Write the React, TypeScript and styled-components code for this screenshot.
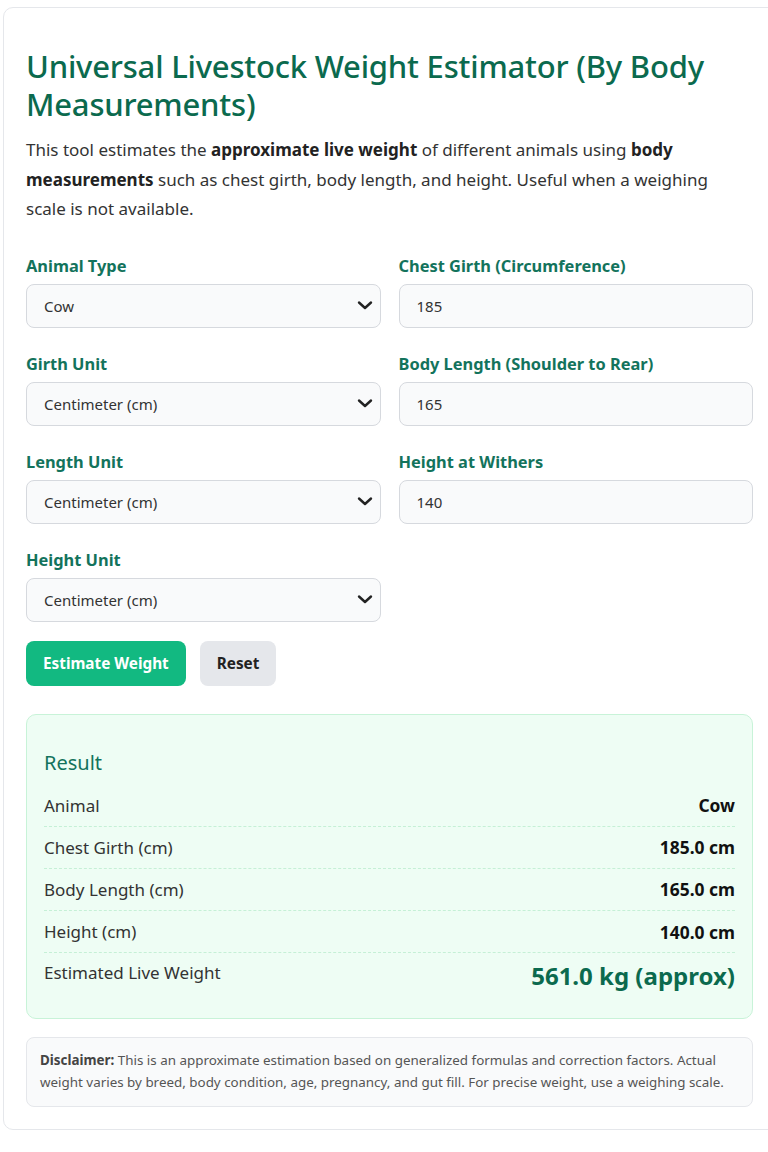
import React, { useState } from 'react';
import styled, { createGlobalStyle } from 'styled-components';

const GlobalStyle = createGlobalStyle`
  html, body {
    margin: 0;
    padding: 0;
    background: #ffffff;
    overflow-x: hidden;
  }
  body {
    font-family: 'Noto Sans', 'Open Sans', sans-serif;
    color: #222;
  }
`;

// Outer card, runs past the right edge of the viewport like the screenshot
const Card = styled.div`
  margin: 7px 0 0 3px;
  width: 790px;
  box-sizing: border-box;
  padding: 39px 36px 22px 22px;
  border: 1px solid #e5e7eb;
  border-radius: 10px;
  background: #fff;
`;

const Inner = styled.div`
  width: 727px;
`;

const Title = styled.h1`
  margin: 0 0 12px;
  font-size: 31px;
  line-height: 38px;
  font-weight: 500;
  color: #0b6a4e;
  letter-spacing: -0.2px;
`;

const Intro = styled.p`
  margin: 0 0 31px;
  padding-right: 24px;
  font-size: 17px;
  line-height: 29.5px;
  color: #333;

  b {
    font-weight: 700;
    color: #222;
  }
`;

const FormGrid = styled.div`
  display: grid;
  grid-template-columns: 1fr 1fr;
  column-gap: 18px;
  row-gap: 25px;
`;

const Field = styled.div`
  display: flex;
  flex-direction: column;
  gap: 7px;
`;

const Label = styled.label`
  font-size: 16.4px;
  line-height: 22px;
  font-weight: 700;
  color: #13735c;
`;

const controlBase = `
  width: 100%;
  height: 44px;
  box-sizing: border-box;
  border: 1px solid #d6d9de;
  border-radius: 8px;
  background: #f9fafb;
  padding: 0 17px;
  font-family: 'Noto Sans', 'Open Sans', sans-serif;
  font-size: 15px;
  color: #333;
  outline: none;
`;

const SelectWrap = styled.div`
  position: relative;
`;

const Select = styled.select`
  ${controlBase}
  appearance: none;
  -webkit-appearance: none;
`;

const Chevron = styled.svg`
  position: absolute;
  right: 8px;
  top: 15px;
  pointer-events: none;
`;

const Input = styled.input`
  ${controlBase}
`;

const Actions = styled.div`
  display: flex;
  gap: 14px;
  margin-top: 19px;
`;

const Button = styled.button<{ $primary?: boolean }>`
  height: 45px;
  border: none;
  border-radius: 8px;
  padding: 0 17px;
  font-family: 'Noto Sans', 'Open Sans', sans-serif;
  font-size: 15.3px;
  font-weight: 700;
  cursor: pointer;
  background: ${(p) => (p.$primary ? '#12b981' : '#e5e7eb')};
  color: ${(p) => (p.$primary ? '#fff' : '#222')};
`;

const ResultBox = styled.div`
  margin-top: 28px;
  border: 1px solid #c8f3d8;
  border-radius: 10px;
  background: #eefdf4;
  padding: 34px 17px 20px;
`;

const ResultTitle = styled.h2`
  margin: 0 0 8px;
  font-size: 20px;
  line-height: 28px;
  font-weight: 400;
  color: #13735c;
`;

const Row = styled.div<{ $last?: boolean }>`
  display: flex;
  justify-content: space-between;
  align-items: ${(p) => (p.$last ? 'flex-start' : 'center')};
  padding: 7.6px 0;
  min-height: 26px;
  border-bottom: ${(p) => (p.$last ? 'none' : '1px dashed #c5f0d6')};
  font-size: 17px;
  color: #333;
`;

const Value = styled.span<{ $big?: boolean }>`
  font-weight: 700;
  color: ${(p) => (p.$big ? '#0b6a4e' : '#111')};
  font-size: ${(p) => (p.$big ? '24px' : '17.4px')};
  line-height: ${(p) => (p.$big ? '30px' : '26px')};
`;

const Disclaimer = styled.div`
  margin-top: 18px;
  border: 1px solid #e5e7eb;
  border-radius: 8px;
  background: #f9fafb;
  padding: 12px 13px 13px 13px;
  font-size: 13.4px;
  line-height: 21.5px;
  color: #555;

  b {
    color: #444;
  }
`;

const ChevronIcon = () => (
  <Chevron width="16" height="12" viewBox="0 0 16 12">
    <path d="M2 3.5 L8 9 L14 3.5" fill="none" stroke="#222" strokeWidth="2.4" strokeLinecap="round" strokeLinejoin="round" />
  </Chevron>
);

const unitOptions = ['Centimeter (cm)', 'Inch (in)', 'Meter (m)'];

const App: React.FC = () => {
  const [girth, setGirth] = useState('185');
  const [length, setLength] = useState('165');
  const [height, setHeight] = useState('140');

  return (
    <>
      <GlobalStyle />
      <Card>
        <Inner>
          <Title>Universal Livestock Weight Estimator (By Body Measurements)</Title>
          <Intro>
            This tool estimates the <b>approximate live weight</b> of different animals using <b>body measurements</b> such as chest girth, body length, and height. Useful when a weighing scale is not available.
          </Intro>

          <FormGrid>
            <Field>
              <Label>Animal Type</Label>
              <SelectWrap>
                <Select defaultValue="Cow">
                  <option>Cow</option>
                  <option>Buffalo</option>
                  <option>Goat</option>
                  <option>Sheep</option>
                  <option>Pig</option>
                </Select>
                <ChevronIcon />
              </SelectWrap>
            </Field>
            <Field>
              <Label>Chest Girth (Circumference)</Label>
              <Input value={girth} onChange={(e) => setGirth(e.target.value)} />
            </Field>

            <Field>
              <Label>Girth Unit</Label>
              <SelectWrap>
                <Select defaultValue={unitOptions[0]}>
                  {unitOptions.map((o) => <option key={o}>{o}</option>)}
                </Select>
                <ChevronIcon />
              </SelectWrap>
            </Field>
            <Field>
              <Label>Body Length (Shoulder to Rear)</Label>
              <Input value={length} onChange={(e) => setLength(e.target.value)} />
            </Field>

            <Field>
              <Label>Length Unit</Label>
              <SelectWrap>
                <Select defaultValue={unitOptions[0]}>
                  {unitOptions.map((o) => <option key={o}>{o}</option>)}
                </Select>
                <ChevronIcon />
              </SelectWrap>
            </Field>
            <Field>
              <Label>Height at Withers</Label>
              <Input value={height} onChange={(e) => setHeight(e.target.value)} />
            </Field>

            <Field>
              <Label>Height Unit</Label>
              <SelectWrap>
                <Select defaultValue={unitOptions[0]}>
                  {unitOptions.map((o) => <option key={o}>{o}</option>)}
                </Select>
                <ChevronIcon />
              </SelectWrap>
            </Field>
          </FormGrid>

          <Actions>
            <Button $primary>Estimate Weight</Button>
            <Button>Reset</Button>
          </Actions>

          <ResultBox>
            <ResultTitle>Result</ResultTitle>
            <Row><span>Animal</span><Value>Cow</Value></Row>
            <Row><span>Chest Girth (cm)</span><Value>185.0 cm</Value></Row>
            <Row><span>Body Length (cm)</span><Value>165.0 cm</Value></Row>
            <Row><span>Height (cm)</span><Value>140.0 cm</Value></Row>
            <Row $last><span>Estimated Live Weight</span><Value $big>561.0 kg (approx)</Value></Row>
          </ResultBox>

          <Disclaimer>
            <b>Disclaimer:</b> This is an approximate estimation based on generalized formulas and correction factors. Actual weight varies by breed, body condition, age, pregnancy, and gut fill. For precise weight, use a weighing scale.
          </Disclaimer>
        </Inner>
      </Card>
    </>
  );
};

export default App;
